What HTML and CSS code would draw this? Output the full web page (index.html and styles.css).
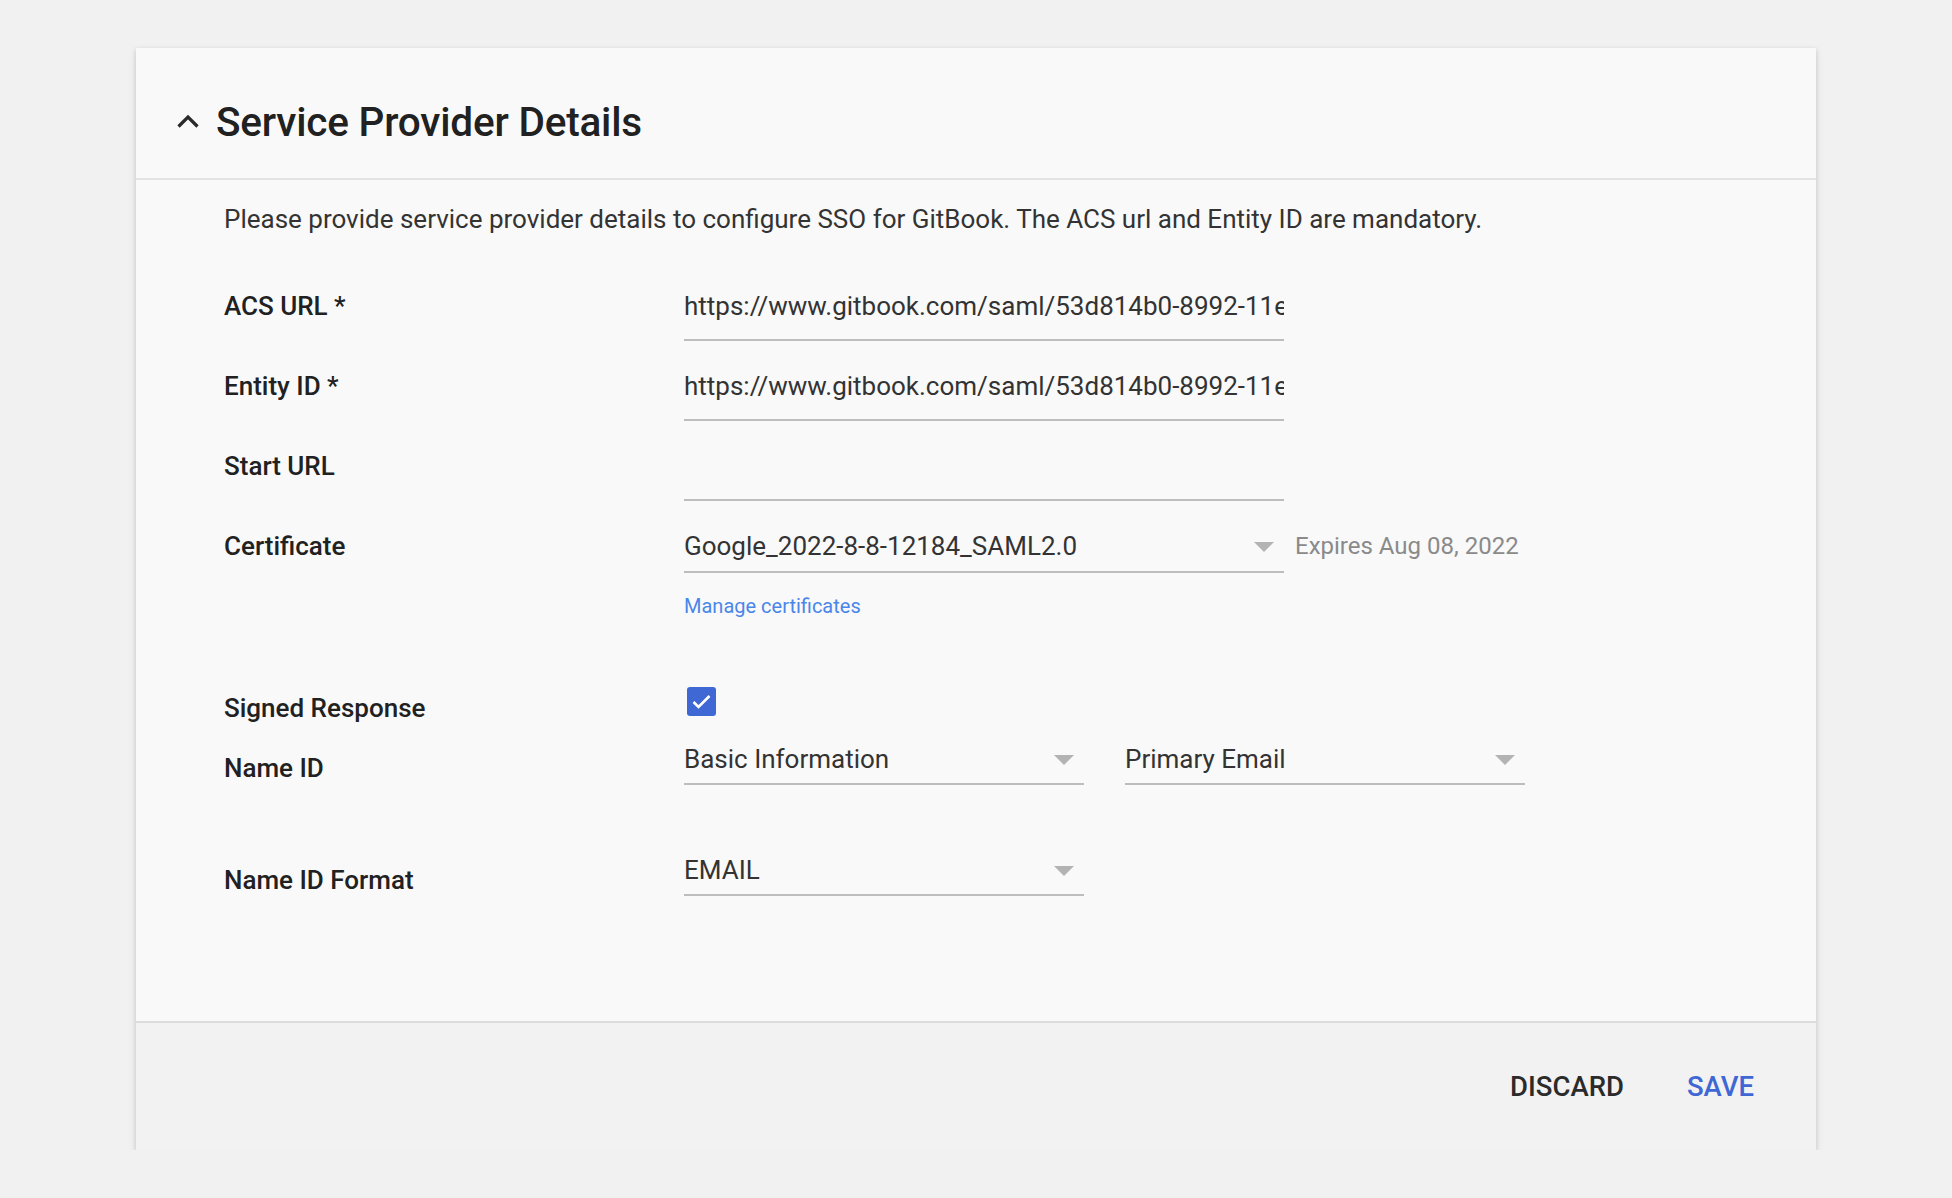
FILE: index.html
```html
<!DOCTYPE html>
<html lang="en">
<head>
<meta charset="utf-8">
<title>Service Provider Details</title>
<link rel="stylesheet" href="styles.css">
</head>
<body>
<div class="card">
  <div class="card-header">
    <svg class="chev" width="24" height="14" viewBox="0 0 24 14"><polyline points="2.5,12.5 12,3 21.5,12.5" fill="none" stroke="#2a2a2a" stroke-width="3.2"/></svg>
    <h1 class="title">Service Provider Details</h1>
  </div>
  <div class="card-body">
    <p class="desc">Please provide service provider details to configure SSO for GitBook. The ACS url and Entity ID are mandatory.</p>

    <div class="row row-first">
      <div class="label">ACS URL *</div>
      <div class="text-field"><div class="value">https://www.gitbook.com/saml/53d814b0-8992-11e9</div></div>
    </div>
    <div class="row row-next">
      <div class="label">Entity ID *</div>
      <div class="text-field"><div class="value">https://www.gitbook.com/saml/53d814b0-8992-11e9</div></div>
    </div>
    <div class="row row-next">
      <div class="label">Start URL</div>
      <div class="text-field"><div class="value"></div></div>
    </div>
    <div class="row row-next">
      <div class="label">Certificate</div>
      <div class="cert-wrap">
        <div class="select select-wide"><span class="value">Google_2022-8-8-12184_SAML2.0</span><span class="arrow"></span></div>
        <span class="expires">Expires Aug 08, 2022</span>
      </div>
    </div>
    <div class="manage-row"><a class="manage" href="#">Manage certificates</a></div>

    <div class="row row-signed">
      <div class="label">Signed Response</div>
      <div class="checkbox"><svg width="29" height="29" viewBox="0 0 29 29"><polyline points="6.5,15 11.5,20 22.5,9" fill="none" stroke="#fff" stroke-width="2.6"/></svg></div>
    </div>
    <div class="row row-nameid">
      <div class="label label-nameid">Name ID</div>
      <div class="select-pair">
        <div class="select select-narrow"><span class="value">Basic Information</span><span class="arrow"></span></div>
        <div class="select select-narrow"><span class="value">Primary Email</span><span class="arrow"></span></div>
      </div>
    </div>
    <div class="row row-format">
      <div class="label label-format">Name ID Format</div>
      <div class="select select-narrow"><span class="value">EMAIL</span><span class="arrow"></span></div>
    </div>
  </div>
  <div class="card-footer">
    <button class="btn">DISCARD</button>
    <button class="btn btn-primary">SAVE</button>
  </div>
</div>
</body>
</html>
```
FILE: styles.css
```css
* { box-sizing: border-box; }
html, body { margin: 0; padding: 0; }
body {
  background: #f1f1f1;
  font-family: Roboto, "Liberation Sans", Arial, sans-serif;
  color: #222;
  padding: 48px 136px 0;
}
.card {
  width: 1680px;
  background: #f9f9f9;
  box-shadow: 0 2px 5px rgba(0,0,0,0.16), 0 3px 10px rgba(0,0,0,0.06);
}
.card-header {
  display: flex;
  align-items: center;
  padding: 52px 0 34px 40px;
  border-bottom: 2px solid #e3e3e3;
}
.chev { display: block; flex: none; margin-right: 16px; margin-top: -2px; }
.title {
  margin: 0;
  font-size: 40.5px;
  line-height: 44px;
  font-weight: 500;
  color: #212121;
  letter-spacing: -0.2px;
}
.card-body {
  padding: 25px 0 125px 88px;
}
.desc {
  margin: 0;
  font-size: 26px;
  line-height: 28px;
  color: #333;
}
.row { display: flex; align-items: flex-start; }
.row-first { margin-top: 49px; }
.row-next { margin-top: 21px; }
.label {
  width: 460px;
  flex: none;
  font-size: 26px;
  line-height: 48px;
  font-weight: 500;
  color: #212121;
}
.text-field {
  width: 600px;
  padding-bottom: 9px;
  border-bottom: 2px solid #bdbdbd;
}
.value {
  display: block;
  font-size: 26px;
  line-height: 48px;
  height: 48px;
  color: #333;
  white-space: nowrap;
  overflow: hidden;
}
.cert-wrap { display: flex; align-items: flex-start; }
.select {
  display: flex;
  align-items: center;
  justify-content: space-between;
  height: 51px;
  padding-bottom: 1px;
  border-bottom: 2px solid #bdbdbd;
  padding-right: 10px;
}
.select .value { flex: 1; }
.select-wide { width: 600px; }
.select-narrow { width: 400px; height: 50px; padding-bottom: 0; }
.arrow {
  flex: none;
  width: 0;
  height: 0;
  border-left: 10px solid transparent;
  border-right: 10px solid transparent;
  border-top: 10px solid #b3b3b3;
  margin-top: 2px;
}
.expires {
  margin-left: 11px;
  font-size: 24px;
  line-height: 48px;
  color: #8a8a8a;
}
.manage-row { margin-top: 21px; padding-left: 460px; line-height: 24px; }
.manage {
  font-size: 20px;
  color: #4a86ea;
  text-decoration: none;
}
.row-signed { margin-top: 64px; }
.checkbox {
  width: 29px;
  height: 29px;
  margin-top: 3px;
  margin-left: 3px;
  background: #3f68d4;
  border-radius: 3px;
}
.checkbox svg { display: block; }
.row-nameid { margin-top: 3px; align-items: flex-end; }
.label-nameid { line-height: 30px; padding-bottom: 2px; }
.select-pair { display: flex; gap: 41px; }
.row-format { margin-top: 61px; align-items: flex-end; }
.label-format { line-height: 30px; padding-bottom: 1px; }
.card-footer {
  height: 129px;
  border-top: 2px solid #dcdcdc;
  background: #f2f2f2;
  display: flex;
  align-items: center;
  justify-content: flex-end;
  gap: 63px;
  padding-right: 62px;
}
.btn {
  border: none;
  background: none;
  padding: 0;
  margin: 0;
  font-family: Roboto, "Liberation Sans", Arial, sans-serif;
  font-size: 27.5px;
  font-weight: 500;
  color: #2b2b2b;
  cursor: pointer;
}
.btn-primary { color: #3f68d4; }
```
